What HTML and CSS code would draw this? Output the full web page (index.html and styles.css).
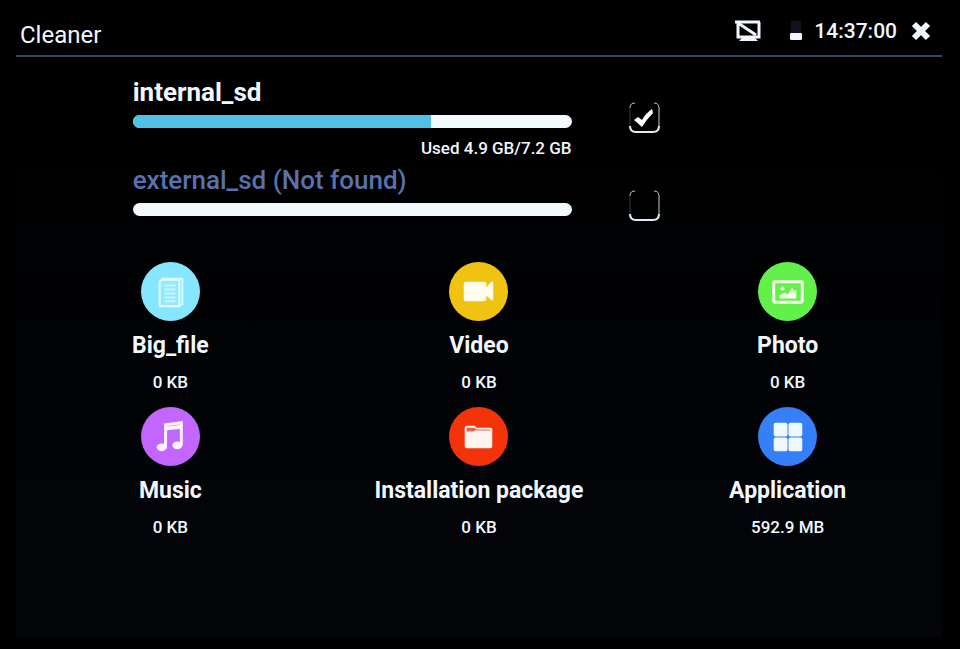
FILE: index.html
```html
<!DOCTYPE html>
<html lang="en">
<head>
<meta charset="utf-8">
<meta name="viewport" content="width=device-width, initial-scale=1">
<title>Cleaner</title>
<link rel="stylesheet" href="styles.css">
</head>
<body>
<div class="screen">
  <header class="topbar">
    <h1 class="app-title">Cleaner</h1>
    <div class="status">
      <svg class="icon-display" viewBox="0 0 28 22" aria-hidden="true">
        <path d="M1 2H26M4 2V17H25V2" fill="none" stroke="currentColor" stroke-width="3"/>
        <path d="M4 3L22 15" stroke="currentColor" stroke-width="3"/>
        <path d="M8 18H21L24 21H5Z" fill="currentColor"/>
      </svg>
      <svg class="icon-battery" viewBox="0 0 12 20" aria-hidden="true">
        <rect x="1" y="0" width="10" height="12" fill="#10131d"/>
        <rect x="0" y="12" width="12" height="7" rx="1" fill="currentColor"/>
      </svg>
      <time class="clock">14:37:00</time>
      <button class="close" type="button" aria-label="Close">
        <svg viewBox="0 0 20 20" aria-hidden="true"><path d="M3 3L17 17M17 3L3 17" stroke="currentColor" stroke-width="6"/></svg>
      </button>
    </div>
  </header>

  <main>
    <section class="storage">
      <div class="volume">
        <label class="volume-name" for="internal">internal_sd</label>
        <div class="bar"><div class="bar-fill" style="width:68%"></div></div>
        <p class="usage">Used 4.9 GB/7.2 GB</p>
      </div>
      <span class="check">
        <input type="checkbox" id="internal" checked>
        <svg viewBox="0 0 31 31" aria-hidden="true">
          <path class="edge-dim" d="M1 6V25"/>
          <path class="edge" d="M1 6Q1 1 6 1M25 1Q30 1 30 6V25"/>
          <path class="edge-strong" d="M1 24Q1 30 7 30H24Q30 30 30 24"/>
          <path class="tick" d="M5 18L9 15L13 18Q17 11 23 7L24 11Q18 17 13 25Z"/>
        </svg>
      </span>
      <div class="volume volume-missing">
        <label class="volume-name" for="external">external_sd (Not found)</label>
        <div class="bar"></div>
      </div>
      <span class="check check-missing">
        <input type="checkbox" id="external">
        <svg viewBox="0 0 31 31" aria-hidden="true">
          <path class="edge-dim" d="M1 6V25"/>
          <path class="edge" d="M1 6Q1 1 6 1M25 1Q30 1 30 6V25"/>
          <path class="edge-strong" d="M1 24Q1 30 7 30H24Q30 30 30 24"/>
          <path class="tick" d="M5 18L9 15L13 18Q17 11 23 7L24 11Q18 17 13 25Z"/>
        </svg>
      </span>
    </section>

    <section class="categories">
      <button class="category" type="button">
        <svg class="disc disc-file" viewBox="0 0 60 60" aria-hidden="true">
          <path d="M21 17H42V43H39" fill="none" stroke="#d9faff" stroke-width="2"/>
          <path d="M21 18H39V45H19V20Z" fill="#95e9ff" stroke="#e4fcff" stroke-width="2"/>
          <path d="M24 24H35M24 28H35M24 32H35M24 36H35M24 40H35" stroke="#c5f5ff" stroke-width="2"/>
        </svg>
        <span class="name">Big_file</span>
        <span class="size">0 KB</span>
      </button>
      <button class="category" type="button">
        <svg class="disc disc-video" viewBox="0 0 60 60" aria-hidden="true">
          <path d="M17 20H36Q38 20 38 22V26L43 20H45V39H43L38 34V38Q38 40 36 40H17Q15 40 15 38V22Q15 20 17 20Z" fill="#fffdf0"/>
        </svg>
        <span class="name">Video</span>
        <span class="size">0 KB</span>
      </button>
      <button class="category" type="button">
        <svg class="disc disc-photo" viewBox="0 0 60 60" aria-hidden="true">
          <rect x="16" y="20" width="29" height="21" rx="1" fill="none" stroke="#f1ffeb" stroke-width="3"/>
          <path d="M22 37V34L27 31L30 33L35 26L37 30L39 28V37Z" fill="#f1ffeb"/>
          <circle cx="25" cy="27" r="2" fill="#f1ffeb"/>
        </svg>
        <span class="name">Photo</span>
        <span class="size">0 KB</span>
      </button>
      <button class="category" type="button">
        <svg class="disc disc-music" viewBox="0 0 60 60" aria-hidden="true">
          <path d="M25 42V18L41 16V39" fill="none" stroke="#fff5ff" stroke-width="3"/>
          <path d="M25 20L41 18V22L25 24Z" fill="#fff5ff"/>
          <ellipse cx="21" cy="41" rx="5" ry="4" fill="#fff5ff"/>
          <ellipse cx="37" cy="39" rx="5" ry="4" fill="#fff5ff"/>
        </svg>
        <span class="name">Music</span>
        <span class="size">0 KB</span>
      </button>
      <button class="category" type="button">
        <svg class="disc disc-package" viewBox="0 0 60 60" aria-hidden="true">
          <path d="M18 19H26L28 21H42Q44 21 44 23V40Q44 42 42 42H18Q16 42 16 40V21Q16 19 18 19Z" fill="#fff5f0"/>
          <path d="M18 21H26L28 23H42V24H26L25 25H18Z" fill="#e9604a"/>
        </svg>
        <span class="name">Installation package</span>
        <span class="size">0 KB</span>
      </button>
      <button class="category" type="button">
        <svg class="disc disc-apps" viewBox="0 0 60 60" aria-hidden="true">
          <g fill="#f0f8ff">
            <rect x="16" y="16" width="14" height="14" rx="2"/><rect x="31" y="16" width="14" height="14" rx="2"/>
            <rect x="16" y="31" width="14" height="14" rx="2"/><rect x="31" y="31" width="14" height="14" rx="2"/>
          </g>
        </svg>
        <span class="name">Application</span>
        <span class="size">592.9 MB</span>
      </button>
    </section>
  </main>
</div>
</body>
</html>
```
FILE: styles.css
```css
* {
  box-sizing: border-box;
}

body {
  margin: 0;
  min-height: 100vh;
  padding: 0 18px 12px 16px;
  display: flex;
  background: #000;
  color: #f2f7ff;
  font-family: Roboto, "Liberation Sans", sans-serif;
}

.screen {
  flex: 1;
  background: linear-gradient(#000 20%, #020408 80%, #030509);
}

.topbar {
  display: flex;
  justify-content: space-between;
  padding: 15px 11px 4px 4px;
  border-bottom: 2px solid #35475f;
}

.app-title {
  margin: 4px 0 0;
  font-size: 24px;
  line-height: 32px;
  font-weight: 400;
}

.status {
  display: flex;
  align-items: center;
  height: 32px;
}

.icon-display {
  width: 28px;
  height: 22px;
  margin-right: 28px;
}

.icon-battery {
  width: 12px;
  height: 20px;
  margin-right: 12px;
}

.clock {
  font-size: 21px;
  font-weight: 500;
  margin-right: 14px;
}

.close {
  display: flex;
  padding: 0;
  border: 0;
  background: none;
  color: inherit;
}

.close svg {
  width: 20px;
  height: 20px;
}

.storage {
  display: grid;
  grid-template-columns: 1fr 31px;
  column-gap: 57px;
  padding: 19px 30.5% 0 12.6%;
}

.volume-name {
  display: block;
  font-size: 26px;
  line-height: 32px;
  font-weight: 700;
}

.volume-missing .volume-name {
  color: #5872ad;
  font-weight: 500;
}

.bar {
  height: 13px;
  margin-top: 7px;
  border-radius: 7px;
  background: #f3fafc;
  overflow: hidden;
}

.bar-fill {
  height: 100%;
  background: #50c0e6;
}

.usage {
  margin: 8px 0 0;
  font-size: 17px;
  line-height: 24px;
  font-weight: 500;
  text-align: right;
}

.volume-missing {
  margin-top: 4px;
}

.check {
  display: grid;
  width: 31px;
  height: 31px;
  margin-top: 26px;
}

.check-missing {
  margin-top: 30px;
}

.check input,
.check svg {
  grid-area: 1 / 1;
  width: 31px;
  height: 31px;
  margin: 0;
}

.check input {
  appearance: none;
}

.check svg {
  pointer-events: none;
  fill: none;
}

.edge {
  stroke: #c3c9d6;
}

.edge-dim {
  stroke: #343949;
}

.edge-strong {
  stroke: #e6eaf2;
  stroke-width: 2;
}

.tick {
  fill: #fff;
  visibility: hidden;
}

input:checked + svg .tick {
  visibility: visible;
}

.categories {
  display: grid;
  grid-template-columns: repeat(3, 1fr);
  row-gap: 13px;
  padding-top: 41px;
}

.category {
  display: flex;
  flex-direction: column;
  align-items: center;
  padding: 0;
  border: 0;
  background: none;
  color: inherit;
  font-family: inherit;
}

.disc {
  width: 59px;
  height: 59px;
  border-radius: 50%;
}

.disc-file {
  background: #86e6ff;
}

.disc-video {
  background: #f0c211;
}

.disc-photo {
  background: #63f04a;
}

.disc-music {
  background: #c266ff;
}

.disc-package {
  background: #f5330a;
}

.disc-apps {
  background: #3580f8;
}

.name {
  margin-top: 9px;
  font-size: 23px;
  line-height: 32px;
  font-weight: 700;
}

.size {
  margin-top: 8px;
  font-size: 17px;
  line-height: 24px;
  font-weight: 500;
}
```
